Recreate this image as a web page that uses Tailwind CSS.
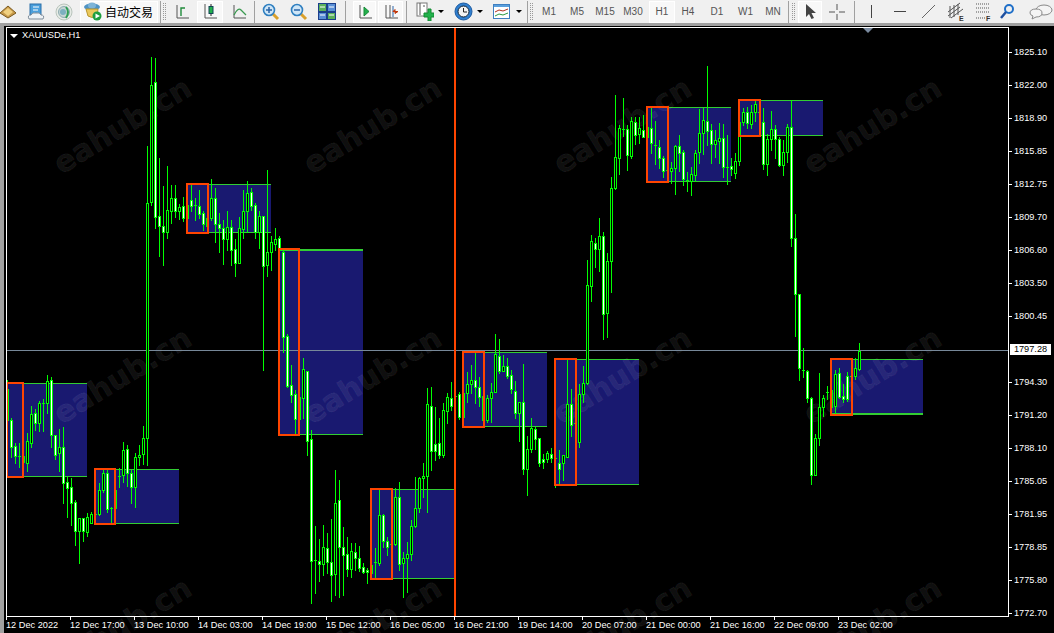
<!DOCTYPE html>
<html lang="en">
<head>
  <meta charset="UTF-8">
  <title>XAUUSDe,H1</title>
  <script src="https://cdn.jsdelivr.net/npm/@tailwindcss/browser@4"></script>
</head>
<body class="bg-black">
<div class="w-[1054px] h-[633px] overflow-hidden flex flex-col relative font-['Liberation_Sans',sans-serif]">

  <!-- toolbar -->
  <header class="h-[26px] shrink-0 bg-[#f0f0f0] border-b-[3px] border-[#a0a0a0] flex items-center text-[10px] text-[#555] relative z-10">
    <div class="w-[22px] flex justify-start">
      <svg width="17" height="14" viewBox="0 0 17 14"><path d="M0 8 L8 1 L16 8 L8 13Z" fill="#c89a4a" stroke="#7a5a20"/><path d="M3 7 L8 3 L13 7 L8 11Z" fill="#f0d080"/></svg>
    </div>
    <div class="w-[28px] flex justify-center">
      <svg width="18" height="18" viewBox="0 0 18 18"><rect x="3" y="1" width="11" height="11" fill="#4a9fdc" stroke="#2a6fa8"/><path d="M6 4h6M6 7h5" stroke="#fff"/><path d="M2 16 Q0 12 4 12 Q5 9 9 10 Q13 9 14 12 Q18 12 16 16Z" fill="#eef2f6" stroke="#7f8c99"/></svg>
    </div>
    <div class="w-[28px] flex justify-center">
      <svg width="18" height="18" viewBox="0 0 18 18"><circle cx="9" cy="9" r="8" fill="#e6ebe6" stroke="#b9c4bc"/><circle cx="9" cy="9" r="5.500" fill="#c6d4d4" stroke="#8fadb2"/><circle cx="8" cy="9" r="3" fill="#7cb0c0"/><path d="M11 4 Q15 9 11 15" fill="none" stroke="#2f9e55" stroke-width="2"/></svg>
    </div>
    <div class="w-[78px] ml-[2px] h-[22px] bg-[#f8f8f8] border border-white flex items-center gap-[3px] pl-[3px] shrink-0">
      <svg width="18" height="19" viewBox="0 0 18 19"><ellipse cx="8" cy="5" rx="8" ry="3.500" fill="#4f93c4"/><ellipse cx="8" cy="3.500" rx="4" ry="3" fill="#7db4d8"/><path d="M2 7 H14 L13 14 Q8 17 4 14Z" fill="#ecc95c" stroke="#b8962e"/><circle cx="13" cy="14" r="4.500" fill="#1f9e3f"/><path d="M11.500 11.500 L16 14 L11.500 16.500Z" fill="#fff"/></svg>
      <span class="font-['Noto_Sans_CJK_SC',sans-serif] text-[12px] text-black leading-none">自动交易</span>
    </div>
    <div class="w-px h-[22px] bg-[#a0a0a0] ml-[2px]"></div>
    <div class="w-[3px] h-[17px] ml-[2px] border-x border-dotted border-[#999]"></div>
    <div class="w-[31px] flex justify-center">
      <svg width="16" height="16" viewBox="0 0 16 16" fill="none"><path d="M3 1V14H15" stroke="#555"/><path d="M7 12V4H11" stroke="#1f8a3a" stroke-width="1.400"/></svg>
    </div>
    <div class="w-[26px] h-[22px] bg-[#f8f8f8] border border-white flex items-center justify-center shrink-0">
      <svg width="16" height="17" viewBox="0 0 16 17" fill="none"><path d="M3 1V15H15" stroke="#555"/><path d="M9 1V13" stroke="#222"/><rect x="7" y="3.500" width="4" height="7" fill="#22b14c" stroke="#145"/></svg>
    </div>
    <div class="w-[31px] flex justify-center">
      <svg width="16" height="16" viewBox="0 0 16 16" fill="none"><path d="M3 1V14H15" stroke="#555"/><path d="M3 11 Q7 3 10 6 T15 11" stroke="#3a9a50" stroke-width="1.300"/></svg>
    </div>
    <div class="w-px h-[22px] bg-[#a0a0a0]"></div>
    <div class="w-[28px] ml-[2px] flex justify-center">
      <svg width="18" height="18" viewBox="0 0 18 18" fill="none"><path d="M11 11 L16 16" stroke="#d9a02c" stroke-width="3"/><circle cx="7" cy="7" r="5.500" fill="#cfe6f7" stroke="#2f7fc0" stroke-width="1.600"/><path d="M4 7H10M7 4V10" stroke="#2a64a8" stroke-width="1.500"/></svg>
    </div>
    <div class="w-[28px] flex justify-center">
      <svg width="18" height="18" viewBox="0 0 18 18" fill="none"><path d="M11 11 L16 16" stroke="#d9a02c" stroke-width="3"/><circle cx="7" cy="7" r="5.500" fill="#cfe6f7" stroke="#2f7fc0" stroke-width="1.600"/><path d="M4 7H10" stroke="#2a64a8" stroke-width="1.500"/></svg>
    </div>
    <div class="w-[28px] flex justify-center">
      <svg width="18" height="17" viewBox="0 0 18 17"><rect width="18" height="17" fill="#1c3f8a"/><rect x="1" y="1" width="7" height="7" fill="#5bb05b"/><rect x="10" y="1" width="7" height="7" fill="#5a8fd6"/><rect x="1" y="10" width="7" height="6" fill="#5a8fd6"/><rect x="10" y="10" width="7" height="6" fill="#5bb05b"/><path d="M2 4h5M11 4h5M2 12h5M11 12h5" stroke="#fff"/></svg>
    </div>
    <div class="w-px h-[22px] bg-[#a0a0a0] ml-[4px]"></div>
    <div class="w-[23px] ml-[7px] h-[22px] bg-[#f8f8f8] border border-white flex items-center justify-center shrink-0">
      <svg width="15" height="16" viewBox="0 0 15 16" fill="none"><path d="M3 1V14H15" stroke="#555"/><path d="M7 3V12L12 7.500Z" fill="#22b14c" stroke="#1a8a3a"/></svg>
    </div>
    <div class="w-[25px] ml-[2px] h-[22px] bg-[#f8f8f8] border border-white flex items-center justify-center shrink-0">
      <svg width="16" height="16" viewBox="0 0 16 16" fill="none"><path d="M3 1V14H15M7 1V14" stroke="#555"/><path d="M10 2V13" stroke="#2a64a8"/><path d="M15 7.500H10L12 5.500V9.500Z" fill="#c03a10" stroke="#c03a10"/></svg>
    </div>
    <div class="w-px h-[22px] bg-[#a0a0a0] ml-[3px]"></div>
    <div class="ml-[9px] flex items-center gap-[4px]">
      <svg width="18" height="19" viewBox="0 0 18 19" fill="none"><rect x="1" y="1" width="10" height="13" fill="#fff" stroke="#777"/><path d="M4 1V13M7 4H9" stroke="#555"/><path d="M8 11H12V7H15V11H18V15H15V19H12V15H8Z" fill="#22b14c" stroke="#138a30"/></svg>
      <span class="w-0 h-0 border-x-[3px] border-x-transparent border-t-[3px] border-t-black"></span>
    </div>
    <div class="ml-[10px] flex items-center gap-[4px]">
      <svg width="19" height="19" viewBox="0 0 19 19" fill="none"><circle cx="9.500" cy="9.500" r="8.500" fill="#2f7fd0" stroke="#1c5aa0"/><circle cx="9.500" cy="9.500" r="5.500" fill="#f3f3f3" stroke="#123"/><path d="M9.500 6V10H13" stroke="#222"/></svg>
      <span class="w-0 h-0 border-x-[3px] border-x-transparent border-t-[3px] border-t-black"></span>
    </div>
    <div class="ml-[10px] flex items-center gap-[6px]">
      <svg width="17" height="15" viewBox="0 0 17 15" fill="none"><rect x=".5" y=".5" width="16" height="14" fill="#fff" stroke="#3f7fc0"/><rect x="1" y="1" width="15" height="2" fill="#5a9fdc"/><path d="M2 8 L6 6 L10 7 L15 5" stroke="#b03020"/><path d="M2 12 L6 10 L10 11 L15 9" stroke="#2a9a40"/></svg>
      <span class="w-0 h-0 border-x-[3px] border-x-transparent border-t-[3px] border-t-black"></span>
    </div>
    <div class="w-px h-[22px] bg-[#a0a0a0] ml-[5px]"></div>
    <div class="w-[3px] h-[17px] ml-[2px] border-x border-dotted border-[#999]"></div>
    <div class="flex items-center ml-[2px]">
      <span class="w-[28px] text-center">M1</span>
      <span class="w-[28px] text-center">M5</span>
      <span class="w-[28px] text-center">M15</span>
      <span class="w-[28px] text-center">M30</span>
      <span class="w-[26px] ml-[2px] h-[22px] leading-[20px] bg-[#f8f8f8] border border-white text-center">H1</span>
      <span class="w-[26px] text-center">H4</span>
      <span class="w-[28px] text-center ml-[2px]">D1</span>
      <span class="w-[29px] text-center">W1</span>
      <span class="w-[26px] text-center">MN</span>
    </div>
    <div class="w-px h-[22px] bg-[#a0a0a0] ml-[2px]"></div>
    <div class="w-[3px] h-[17px] ml-[3px] border-x border-dotted border-[#999]"></div>
    <div class="w-[24px] h-[22px] ml-[3px] bg-[#f8f8f8] border border-white flex items-center justify-center shrink-0">
      <svg width="11" height="15" viewBox="0 0 11 15"><path d="M1 0V13L4 10L6.500 15L9 14L6.500 9H11Z" fill="#444"/></svg>
    </div>
    <div class="w-[30px] flex justify-center">
      <svg width="16" height="16" viewBox="0 0 16 16" fill="none"><path d="M0 8H6M10 8H16M8 0V6M8 10V16" stroke="#555"/></svg>
    </div>
    <div class="w-px h-[22px] bg-[#a0a0a0] ml-[2px]"></div>
    <div class="w-[32px] flex justify-center"><span class="w-px h-[13px] bg-[#444]"></span></div>
    <div class="w-[26px] flex justify-center"><span class="w-[12px] h-px bg-[#444]"></span></div>
    <div class="w-[30px] flex justify-center">
      <svg width="13" height="13" viewBox="0 0 13 13" fill="none"><path d="M0 13L13 0" stroke="#666"/></svg>
    </div>
    <div class="w-[26px] flex justify-center">
      <svg width="17" height="19" viewBox="0 0 17 19" fill="none" stroke="#555"><path d="M0 10L12 1M0 14L12 5M3 16L15 7M2 4V16M6 3V15M10 2V13"/><text x="11" y="19" font-size="7" font-family="Liberation Sans" font-weight="bold" fill="#333" stroke="none">E</text></svg>
    </div>
    <div class="w-[28px] flex justify-center">
      <svg width="15" height="18" viewBox="0 0 15 18" fill="none" stroke="#555" stroke-dasharray="1 1"><path d="M0 1H14M0 5H14M0 9H14M0 15H10"/><text x="10" y="18" font-size="7" font-family="Liberation Sans" font-weight="bold" fill="#333" stroke="none" stroke-dasharray="0">F</text></svg>
    </div>
    <div class="w-[20px] flex justify-center">
      <svg width="14" height="15" viewBox="0 0 14 15" fill="none"><circle cx="9" cy="5" r="4" stroke="#1f6fc8" stroke-width="2"/><path d="M6 8L1 14" stroke="#1f50a0" stroke-width="2.500"/></svg>
    </div>
    <div class="w-[25px] ml-[11px] shrink-0 flex justify-center">
      <svg width="25" height="16" viewBox="0 0 25 16" fill="#f4f4f4" stroke="#888"><ellipse cx="16" cy="6" rx="8" ry="5"/><path d="M2 9 Q2 5 8 5 Q14 5 14 9 Q14 13 8 13 L4 15 L5 12 Q2 11 2 9Z"/></svg>
    </div>
  </header>

  <!-- chart area -->
  <main class="flex-1 flex relative bg-black">
    <svg id="chart" class="absolute left-0 top-0" width="1054" height="607" viewBox="0 26 1054 607" shape-rendering="crispEdges"></svg>
    <div class="absolute left-0 top-[-3px] bottom-0 w-[4px] bg-[#a0a0a0]"></div>
    <div class="w-[4px] shrink-0"></div>

    <div class="w-[1005px] pl-[2px] shrink-0 flex flex-col relative">
      <div class="mt-[1px] h-[590px] border border-white relative">
        <div class="flex items-center h-[14px] mt-[1px] pl-[3px] gap-[4px] text-[9.300px] text-white leading-none">
          <span class="w-0 h-0 border-x-[4px] border-x-transparent border-t-[4px] border-t-white"></span>
          <span>XAUUSDe,H1</span>
        </div>
        <span class="absolute right-[135px] top-0 w-0 h-0 border-x-[5px] border-x-transparent border-t-[5px] border-t-[#7b8ba0]"></span>
      </div>
      <div class="flex h-[16px] text-[9.200px] text-white leading-none">
        <span class="w-[64px] shrink-0 relative pt-[4px] before:absolute before:left-0 before:top-0 before:w-px before:h-[3px] before:bg-white whitespace-nowrap">12 Dec 2022</span>
        <span class="w-[64px] shrink-0 relative pt-[4px] before:absolute before:left-0 before:top-0 before:w-px before:h-[3px] before:bg-white whitespace-nowrap">12 Dec 17:00</span>
        <span class="w-[64px] shrink-0 relative pt-[4px] before:absolute before:left-0 before:top-0 before:w-px before:h-[3px] before:bg-white whitespace-nowrap">13 Dec 10:00</span>
        <span class="w-[64px] shrink-0 relative pt-[4px] before:absolute before:left-0 before:top-0 before:w-px before:h-[3px] before:bg-white whitespace-nowrap">14 Dec 03:00</span>
        <span class="w-[64px] shrink-0 relative pt-[4px] before:absolute before:left-0 before:top-0 before:w-px before:h-[3px] before:bg-white whitespace-nowrap">14 Dec 19:00</span>
        <span class="w-[64px] shrink-0 relative pt-[4px] before:absolute before:left-0 before:top-0 before:w-px before:h-[3px] before:bg-white whitespace-nowrap">15 Dec 12:00</span>
        <span class="w-[64px] shrink-0 relative pt-[4px] before:absolute before:left-0 before:top-0 before:w-px before:h-[3px] before:bg-white whitespace-nowrap">16 Dec 05:00</span>
        <span class="w-[64px] shrink-0 relative pt-[4px] before:absolute before:left-0 before:top-0 before:w-px before:h-[3px] before:bg-white whitespace-nowrap">16 Dec 21:00</span>
        <span class="w-[64px] shrink-0 relative pt-[4px] before:absolute before:left-0 before:top-0 before:w-px before:h-[3px] before:bg-white whitespace-nowrap">19 Dec 14:00</span>
        <span class="w-[64px] shrink-0 relative pt-[4px] before:absolute before:left-0 before:top-0 before:w-px before:h-[3px] before:bg-white whitespace-nowrap">20 Dec 07:00</span>
        <span class="w-[64px] shrink-0 relative pt-[4px] before:absolute before:left-0 before:top-0 before:w-px before:h-[3px] before:bg-white whitespace-nowrap">21 Dec 00:00</span>
        <span class="w-[64px] shrink-0 relative pt-[4px] before:absolute before:left-0 before:top-0 before:w-px before:h-[3px] before:bg-white whitespace-nowrap">21 Dec 16:00</span>
        <span class="w-[64px] shrink-0 relative pt-[4px] before:absolute before:left-0 before:top-0 before:w-px before:h-[3px] before:bg-white whitespace-nowrap">22 Dec 09:00</span>
        <span class="w-[64px] shrink-0 relative pt-[4px] before:absolute before:left-0 before:top-0 before:w-px before:h-[3px] before:bg-white whitespace-nowrap">23 Dec 02:00</span>
      </div>
    </div>

    <!-- price axis -->
    <div class="flex-1 pt-[10px] flex flex-col text-[9.200px] leading-none text-white relative">
      <div class="h-[33px] shrink-0 flex items-center"><span class="w-[3px] h-px bg-white"></span><span class="ml-[2px]">1825.10</span></div>
      <div class="h-[33px] shrink-0 flex items-center"><span class="w-[3px] h-px bg-white"></span><span class="ml-[2px]">1822.00</span></div>
      <div class="h-[33px] shrink-0 flex items-center"><span class="w-[3px] h-px bg-white"></span><span class="ml-[2px]">1818.90</span></div>
      <div class="h-[33px] shrink-0 flex items-center"><span class="w-[3px] h-px bg-white"></span><span class="ml-[2px]">1815.85</span></div>
      <div class="h-[33px] shrink-0 flex items-center"><span class="w-[3px] h-px bg-white"></span><span class="ml-[2px]">1812.75</span></div>
      <div class="h-[33px] shrink-0 flex items-center"><span class="w-[3px] h-px bg-white"></span><span class="ml-[2px]">1809.70</span></div>
      <div class="h-[33px] shrink-0 flex items-center"><span class="w-[3px] h-px bg-white"></span><span class="ml-[2px]">1806.60</span></div>
      <div class="h-[33px] shrink-0 flex items-center"><span class="w-[3px] h-px bg-white"></span><span class="ml-[2px]">1803.50</span></div>
      <div class="h-[33px] shrink-0 flex items-center"><span class="w-[3px] h-px bg-white"></span><span class="ml-[2px]">1800.45</span></div>
      <div class="h-[33px] shrink-0 flex items-center"><span class="ml-[1px] w-[41px] h-[11px] bg-white text-black flex items-center justify-center">1797.28</span></div>
      <div class="h-[33px] shrink-0 flex items-center"><span class="w-[3px] h-px bg-white"></span><span class="ml-[2px]">1794.30</span></div>
      <div class="h-[33px] shrink-0 flex items-center"><span class="w-[3px] h-px bg-white"></span><span class="ml-[2px]">1791.20</span></div>
      <div class="h-[33px] shrink-0 flex items-center"><span class="w-[3px] h-px bg-white"></span><span class="ml-[2px]">1788.10</span></div>
      <div class="h-[33px] shrink-0 flex items-center"><span class="w-[3px] h-px bg-white"></span><span class="ml-[2px]">1785.05</span></div>
      <div class="h-[33px] shrink-0 flex items-center"><span class="w-[3px] h-px bg-white"></span><span class="ml-[2px]">1781.95</span></div>
      <div class="h-[33px] shrink-0 flex items-center"><span class="w-[3px] h-px bg-white"></span><span class="ml-[2px]">1778.85</span></div>
      <div class="h-[33px] shrink-0 flex items-center"><span class="w-[3px] h-px bg-white"></span><span class="ml-[2px]">1775.80</span></div>
      <div class="h-[33px] shrink-0 flex items-center"><span class="w-[3px] h-px bg-white"></span><span class="ml-[2px]">1772.70</span></div>
    </div>
  </main>
</div>

<script>
  // x, right, top, bottom of each zone, orange box right edge, line widths
  const zones = [
    [7, 87, 383, 476, 23, 1, 1], [95, 179, 469, 523, 115, 1, 1], [187, 271, 184, 232, 208, 1, 1],
    [279, 363, 249, 434, 299, 2, 1], [371, 455, 489, 578, 392, 1, 1], [463, 547, 352, 426, 484, 1, 1],
    [555, 639, 359, 484, 576, 1, 1], [647, 731, 107, 181, 668, 1, 1], [739, 823, 100, 135, 760, 1, 1],
    [831, 923, 359, 414, 852, 1, 2]
  ];

  // candles from x=7 every 4px: high, body top, body bottom, low, white body
  const candles = [
    [380,389,420,430,1],[418,420,447,457,1],[443,446,456,463,1],[443,456,457,467,0],[456,456,462,470,0],[433,441,463,471,0],[406,414,443,447,0],[409,413,423,430,1],
    [401,403,423,431,0],[399,403,404,431,0],[375,381,403,413,0],[377,380,435,447,1],[435,435,455,459,1],[429,447,453,471,0],[427,447,483,503,1],[477,482,488,517,1],
    [478,487,503,525,1],[500,502,531,545,1],[518,518,531,563,0],[518,518,531,541,1],[513,517,532,536,0],[512,514,523,523,0],[514,514,515,515,0],[483,490,514,515,0],
    [470,473,490,492,0],[470,473,509,512,1],[507,508,509,523,0],[477,490,508,508,0],[468,476,477,487,0],[442,450,475,482,0],[445,449,473,486,1],[470,473,487,503,1],
    [453,457,487,507,0],[445,455,457,465,0],[426,438,454,464,0],[146,203,438,465,0],[57,85,202,205,0],[58,82,217,228,1],[158,216,226,256,1],[186,226,232,265,1],
    [166,210,232,238,0],[185,198,211,223,0],[185,198,211,217,1],[204,207,211,219,0],[197,206,218,221,1],[200,205,218,218,0],[185,200,206,211,1],[198,205,206,220,0],
    [190,206,214,218,1],[211,213,224,230,1],[218,218,226,226,0],[179,198,218,220,0],[188,198,224,242,1],[213,224,228,252,1],[220,228,239,264,1],[211,227,239,250,0],
    [220,227,250,265,1],[239,249,263,276,1],[217,228,263,263,0],[190,211,229,238,0],[181,193,211,232,0],[188,192,206,210,1],[203,205,232,238,1],[211,216,232,248,0],
    [216,216,266,370,1],[170,252,265,276,0],[236,242,252,270,0],[228,239,244,250,0],[236,238,250,252,1],[249,252,337,352,1],[334,336,386,387,1],[365,385,395,402,1],
    [390,394,419,433,1],[397,397,419,419,0],[358,369,398,418,0],[371,371,441,455,1],[430,439,561,603,1],[526,560,561,593,0],[539,561,564,581,1],[525,547,564,575,0],
    [533,548,562,573,1],[519,562,575,601,1],[470,503,574,595,0],[480,500,547,597,1],[527,547,555,595,1],[537,554,569,576,1],[543,551,569,577,0],[543,552,558,570,1],
    [546,558,568,571,1],[563,567,572,573,1],[568,570,572,583,1],[562,565,573,573,0],[548,562,563,578,0],[490,515,563,565,0],[514,515,541,547,1],[537,541,547,555,1],
    [533,544,545,548,0],[488,497,544,545,0],[482,497,564,570,1],[552,558,563,597,0],[542,554,558,592,0],[520,526,554,560,0],[477,508,526,527,0],[477,478,508,512,0],
    [463,476,478,497,0],[388,404,476,512,0],[387,406,451,470,1],[407,444,451,460,1],[418,443,455,458,1],[403,410,455,457,0],[393,397,411,423,0],[382,398,406,410,1],
    [394,396,397,420,0],[392,394,417,419,1],[393,393,417,417,0],[372,384,393,402,0],[365,380,384,393,0],[353,380,387,403,1],[377,387,397,406,1],[396,396,420,420,0],
    [395,398,420,422,0],[383,392,398,422,0],[334,354,392,392,0],[339,356,371,373,1],[355,366,371,371,0],[358,366,376,378,1],[370,375,389,393,1],[381,391,413,418,1],
    [402,402,413,441,0],[364,402,469,474,1],[436,449,469,495,0],[418,428,449,452,0],[427,429,439,449,1],[438,438,463,466,1],[454,459,462,468,1],[451,453,459,462,0],
    [448,454,458,462,1],[458,458,459,487,0],[450,463,469,484,1],[455,455,463,480,0],[360,404,457,457,0],[389,404,425,436,1],[423,423,424,441,0],[384,394,442,447,0],
    [366,383,394,402,0],[260,285,383,384,0],[235,241,286,301,0],[238,243,249,267,1],[218,236,249,271,0],[232,236,314,339,1],[253,261,313,337,0],[177,188,261,292,0],
    [95,157,188,189,0],[125,128,158,174,0],[98,129,130,136,0],[125,129,155,170,1],[117,121,156,158,0],[117,122,135,144,1],[117,128,134,143,0],[115,130,137,137,1],
    [127,127,137,137,0],[108,128,143,153,1],[121,145,146,164,0],[140,147,158,168,1],[156,158,171,177,1],[170,170,171,171,0],[162,168,171,183,0],[145,146,168,194,0],
    [135,146,153,171,1],[150,152,179,185,1],[172,180,181,191,0],[167,174,181,195,0],[150,153,175,181,0],[109,133,152,163,0],[108,120,133,154,0],[66,121,131,145,1],
    [124,130,144,163,1],[130,140,144,157,0],[123,138,141,163,0],[124,138,167,177,1],[135,167,168,184,0],[158,166,169,175,1],[153,161,173,178,0],[100,122,161,165,0],
    [108,112,122,125,0],[107,112,123,128,1],[105,112,124,128,0],[101,104,112,121,0],[100,112,113,122,0],[108,122,164,169,1],[134,139,164,175,0],[111,129,139,150,0],
    [125,129,139,158,1],[137,139,165,166,1],[140,152,165,175,0],[124,127,152,162,0],[100,127,238,246,1],[214,238,294,336,1],[294,294,368,380,1],[348,370,371,377,0],
    [370,371,398,402,1],[397,398,475,484,1],[434,438,475,475,0],[373,407,438,445,0],[395,398,407,416,0],[386,392,393,399,0],[390,390,407,407,0],[370,374,406,413,0],
    [368,373,397,398,1],[384,396,399,402,1],[372,376,399,401,1],[376,376,377,377,0],[358,368,376,379,0],[343,351,369,370,0]
  ];

  const svg = document.getElementById('chart');
  const box = (x, y, w, h, c) => `<rect x="${x}" y="${y}" width="${w}" height="${h}" fill="${c}"/>`;
  let out = '';

  for (const [x, r, t, b, , tw, bw] of zones) {
    out += box(x, t, r - x, b - t, '#191970');
    out += box(x, t, r - x, tw, '#32cd32') + box(x, b - bw + 1, r - x, bw, '#32cd32');
  }

  // watermark
  for (const cx of [122, 372, 622, 872]) {
    for (const cy of [125, 375, 625]) {
      out += `<text x="${cx}" y="${cy + 11}" text-anchor="middle" transform="rotate(-31.5 ${cx} ${cy})" font-family="DejaVu Sans" font-weight="bold" font-size="30" fill="#fff" fill-opacity="0.07" stroke="#fff" stroke-opacity="0.06" shape-rendering="auto">eahub.cn</text>`;
    }
  }

  out += box(7, 350, 1001, 1, '#778899');

  candles.forEach(([hi, top, bot, lo, white], i) => {
    const x = 7 + i * 4;
    out += box(x, hi, 1, lo - hi + 1, '#00ff00');
    if (bot - top <= 1) {
      out += box(x - 1, top, 3, 1, '#00ff00');
    } else {
      out += box(x - 1, top, 3, bot - top + 1, '#00ff00');
      out += box(x, top + 1, 1, bot - top - 1, white ? '#ffffff' : '#000000');
    }
  });

  for (const [x, r, t, b, o] of zones) {
    const l = x - 1;
    out += box(l, t - 1, o - l, 2, '#ff4500') + box(l, b, o - l, 2, '#ff4500');
    out += box(l, t - 1, 2, b - t + 3, '#ff4500') + box(o - 1, t - 1, 2, b - t + 3, '#ff4500');
  }
  out += box(454, 27, 2, 590, '#ff4500');
  svg.innerHTML = out;
</script>
</body>
</html>
